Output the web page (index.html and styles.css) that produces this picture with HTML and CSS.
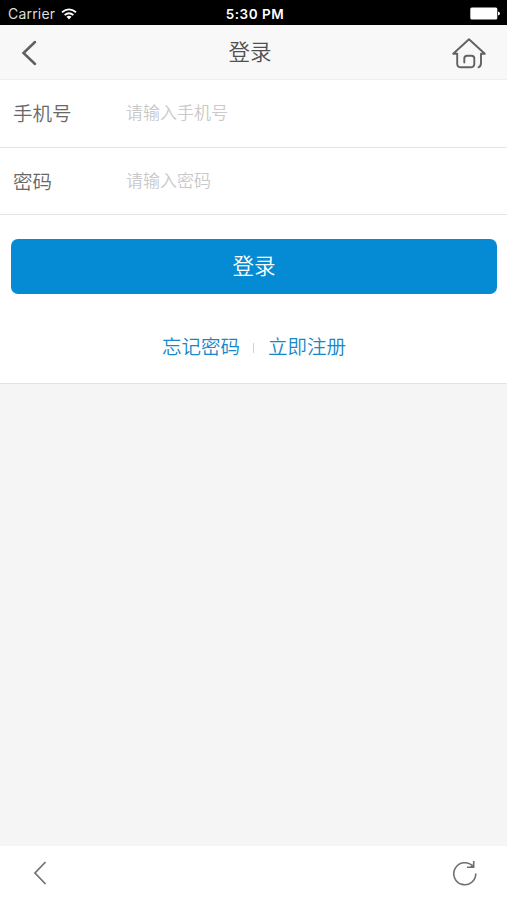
FILE: index.html
```html
<!DOCTYPE html>
<html lang="zh-CN">
<head>
<meta charset="utf-8">
<meta name="viewport" content="width=device-width, initial-scale=1">
<title>登录</title>
<link rel="stylesheet" href="styles.css">
</head>
<body>
<div class="status">
  <div class="carrier"><span>Carrier</span>
    <svg width="16" height="12" viewBox="0 0 16 12" fill="none" stroke="#fff" stroke-width="1.8"><path d="M1 4.2Q8-1.5 15 4.2M3.6 7Q8 3.4 12.4 7"/><path d="M5.5 8.8Q8 6.8 10.5 8.8L8 11.4Z" fill="#fff" stroke="none"/></svg>
  </div>
  <div class="time">5:30 PM</div>
  <svg class="battery" width="30" height="13" viewBox="0 0 30 13" fill="#fff"><rect x=".3" y=".5" width="27" height="12" rx="1.5"/><path d="M28 4.5q2 .3 2 2t-2 2z"/></svg>
</div>
<header class="header">
  <svg class="back" width="16" height="26" viewBox="0 0 16 26" fill="none" stroke="#5e6064" stroke-width="2.5" stroke-linecap="round"><path d="M14 2L2.5 13L14 24"/></svg>
  <h1>登录</h1>
  <svg class="home" width="36" height="32" viewBox="0 0 36 32" fill="none" stroke="#606266" stroke-width="1.9" stroke-linecap="round" stroke-linejoin="round"><path d="M6.2 16.8H2.2L18 2.2L33.8 16.8H30V26Q30 29.5 27.5 30.3"/><path d="M6.2 16.8V26.5Q6.2 30.3 10 30.3H19.5Q23.3 30.3 23.3 26.8V21.6Q23.3 18.8 20.5 18.8H16.2Q13.3 18.8 13.3 21.6V25.5"/></svg>
</header>
<main>
  <form class="panel">
    <label class="row"><span>手机号</span><input type="tel" placeholder="请输入手机号"></label>
    <label class="row"><span>密码</span><input type="password" placeholder="请输入密码"></label>
    <button type="button">登录</button>
    <nav class="links"><a>忘记密码</a><i></i><a>立即注册</a></nav>
  </form>
</main>
<footer class="toolbar">
  <svg width="14" height="26" viewBox="0 0 14 26" fill="none" stroke="#707070" stroke-width="1.7"><path d="M12.5 2L2 13L12.5 24"/></svg>
  <svg width="26" height="28" viewBox="0 0 26 28" fill="none" stroke="#707070" stroke-width="1.6"><path d="M23.800 14.500A11 11 0 1 1 20.800 7.200M21.700 2V8.300H15"/><path d="M21.700 4.800V8.300H17.500Z" fill="#707070" stroke="none"/></svg>
</footer>
</body>
</html>
```

FILE: styles.css
```css
* { box-sizing: border-box; }
body {
  margin: 0;
  height: 900px;
  display: flex;
  flex-direction: column;
  background: #f5f5f5;
  font-family: "Liberation Sans", "Noto Sans CJK SC", sans-serif;
}
svg { display: block; flex: none; }
.status {
  height: 25px;
  display: grid;
  grid-template-columns: 1fr auto 1fr;
  align-items: center;
  padding: 2px 7px 0 8px;
  background: #000;
  color: #fff;
  font: 14px/20px Inter, sans-serif;
}
.carrier { display: flex; align-items: center; gap: 6px; color: #ddd; letter-spacing: .2px; }
.time { font-weight: 600; font-size: 13.5px; letter-spacing: .5px; padding-left: 2px; }
.battery { justify-self: end; }
.header {
  height: 55px;
  display: grid;
  grid-template-columns: 1fr auto 1fr;
  align-items: center;
  padding: 1px 20px 0 21px;
  background: #f8f8f8;
  border-bottom: 1px solid #eee;
}
h1 { margin: 0 8px 0 0; font-size: 21.5px; font-weight: 350; line-height: 32px; color: #505050; }
.home { justify-self: end; }
main { flex: 1; }
.panel { height: 304px; background: #fff; border-bottom: 1px solid #e2e2e2; }
.row {
  height: 67px;
  display: flex;
  align-items: center;
  padding: 0 0 2px 13px;
  border-bottom: 1px solid #e4e4e4;
  color: #686868;
  font-size: 19.5px;
  font-weight: 350;
}
.row:first-child { height: 68px; padding-bottom: 3px; }
.row span { width: 113px; }
input { flex: 1; min-width: 0; height: 28px; margin: 2px 0 0; padding: 2px 0 0; border: 0; outline: 0; background: none; font: inherit; font-size: 17px; }
input::placeholder { color: #c9c9c9; opacity: 1; }
button {
  display: block;
  width: 486px;
  height: 55px;
  margin: 24px auto 0 11px;
  padding: 0 0 5px;
  border: 0;
  border-radius: 7px;
  background: #048bd3;
  color: #fff;
  font: inherit;
  font-size: 21.5px;
  font-weight: 350;
}
.links {
  display: flex;
  justify-content: center;
  align-items: center;
  margin: 38px 0 0 1px;
  font-size: 19.5px;
  font-weight: 350;
  line-height: 30px;
  color: #1688c9;
}
.links i { width: 1px; height: 10px; margin: 2px 14px 0 13px; background: #d0d0d0; }
.toolbar {
  height: 54px;
  display: flex;
  align-items: center;
  justify-content: space-between;
  padding: 0 29px 0 33px;
  background: #fff;
}
```
